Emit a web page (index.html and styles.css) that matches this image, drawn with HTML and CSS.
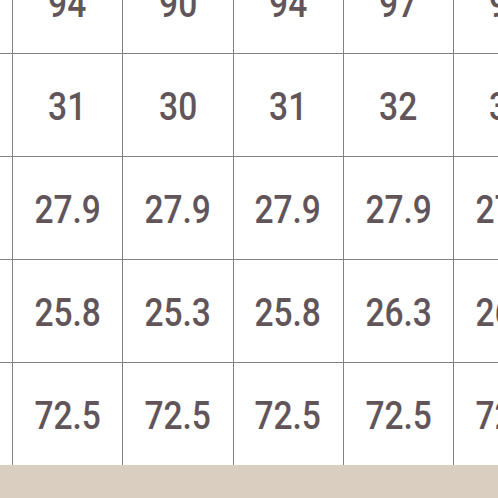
FILE: index.html
```html
<!DOCTYPE html>
<html>
<head>
<meta charset="utf-8">
<link rel="stylesheet" href="styles.css">
</head>
<body>
<div class="sheet">
  <div class="grid">
    <div class="cell"></div><div class="cell"><span class="num">94</span></div><div class="cell"><span class="num">90</span></div><div class="cell"><span class="num">94</span></div><div class="cell"><span class="num">97</span></div><div class="cell"><span class="num">98</span></div>
    <div class="cell"></div><div class="cell"><span class="num">31</span></div><div class="cell"><span class="num">30</span></div><div class="cell"><span class="num">31</span></div><div class="cell"><span class="num">32</span></div><div class="cell"><span class="num">33</span></div>
    <div class="cell"></div><div class="cell"><span class="num">27.9</span></div><div class="cell"><span class="num">27.9</span></div><div class="cell"><span class="num">27.9</span></div><div class="cell"><span class="num">27.9</span></div><div class="cell"><span class="num">27.9</span></div>
    <div class="cell"></div><div class="cell"><span class="num">25.8</span></div><div class="cell"><span class="num">25.3</span></div><div class="cell"><span class="num">25.8</span></div><div class="cell"><span class="num">26.3</span></div><div class="cell"><span class="num">26.8</span></div>
    <div class="cell"></div><div class="cell"><span class="num">72.5</span></div><div class="cell"><span class="num">72.5</span></div><div class="cell"><span class="num">72.5</span></div><div class="cell"><span class="num">72.5</span></div><div class="cell"><span class="num">72.5</span></div>
  </div>
</div>
</body>
</html>
```
FILE: styles.css
```css
html, body {
  margin: 0;
  padding: 0;
}
body {
  width: 498px;
  height: 498px;
  overflow: hidden;
  background: #d9cebf;
}
.sheet {
  display: flex;
}
.grid {
  display: grid;
  grid-template-columns: repeat(6, 109.25px);
  grid-auto-rows: 102px;
  gap: 1px;
  background: #858081;
  margin-top: -49px;
  margin-left: -97.25px;
  flex-shrink: 0;
}
.cell {
  background: #ffffff;
  display: flex;
  align-items: center;
  justify-content: center;
  font-family: Roboto, "Liberation Sans", sans-serif;
  font-weight: 500;
  font-size: 39px;
  color: #62555a;
  padding-top: 3px;
}
.num {
  display: inline-block;
  transform: scaleX(0.86);
}
```
